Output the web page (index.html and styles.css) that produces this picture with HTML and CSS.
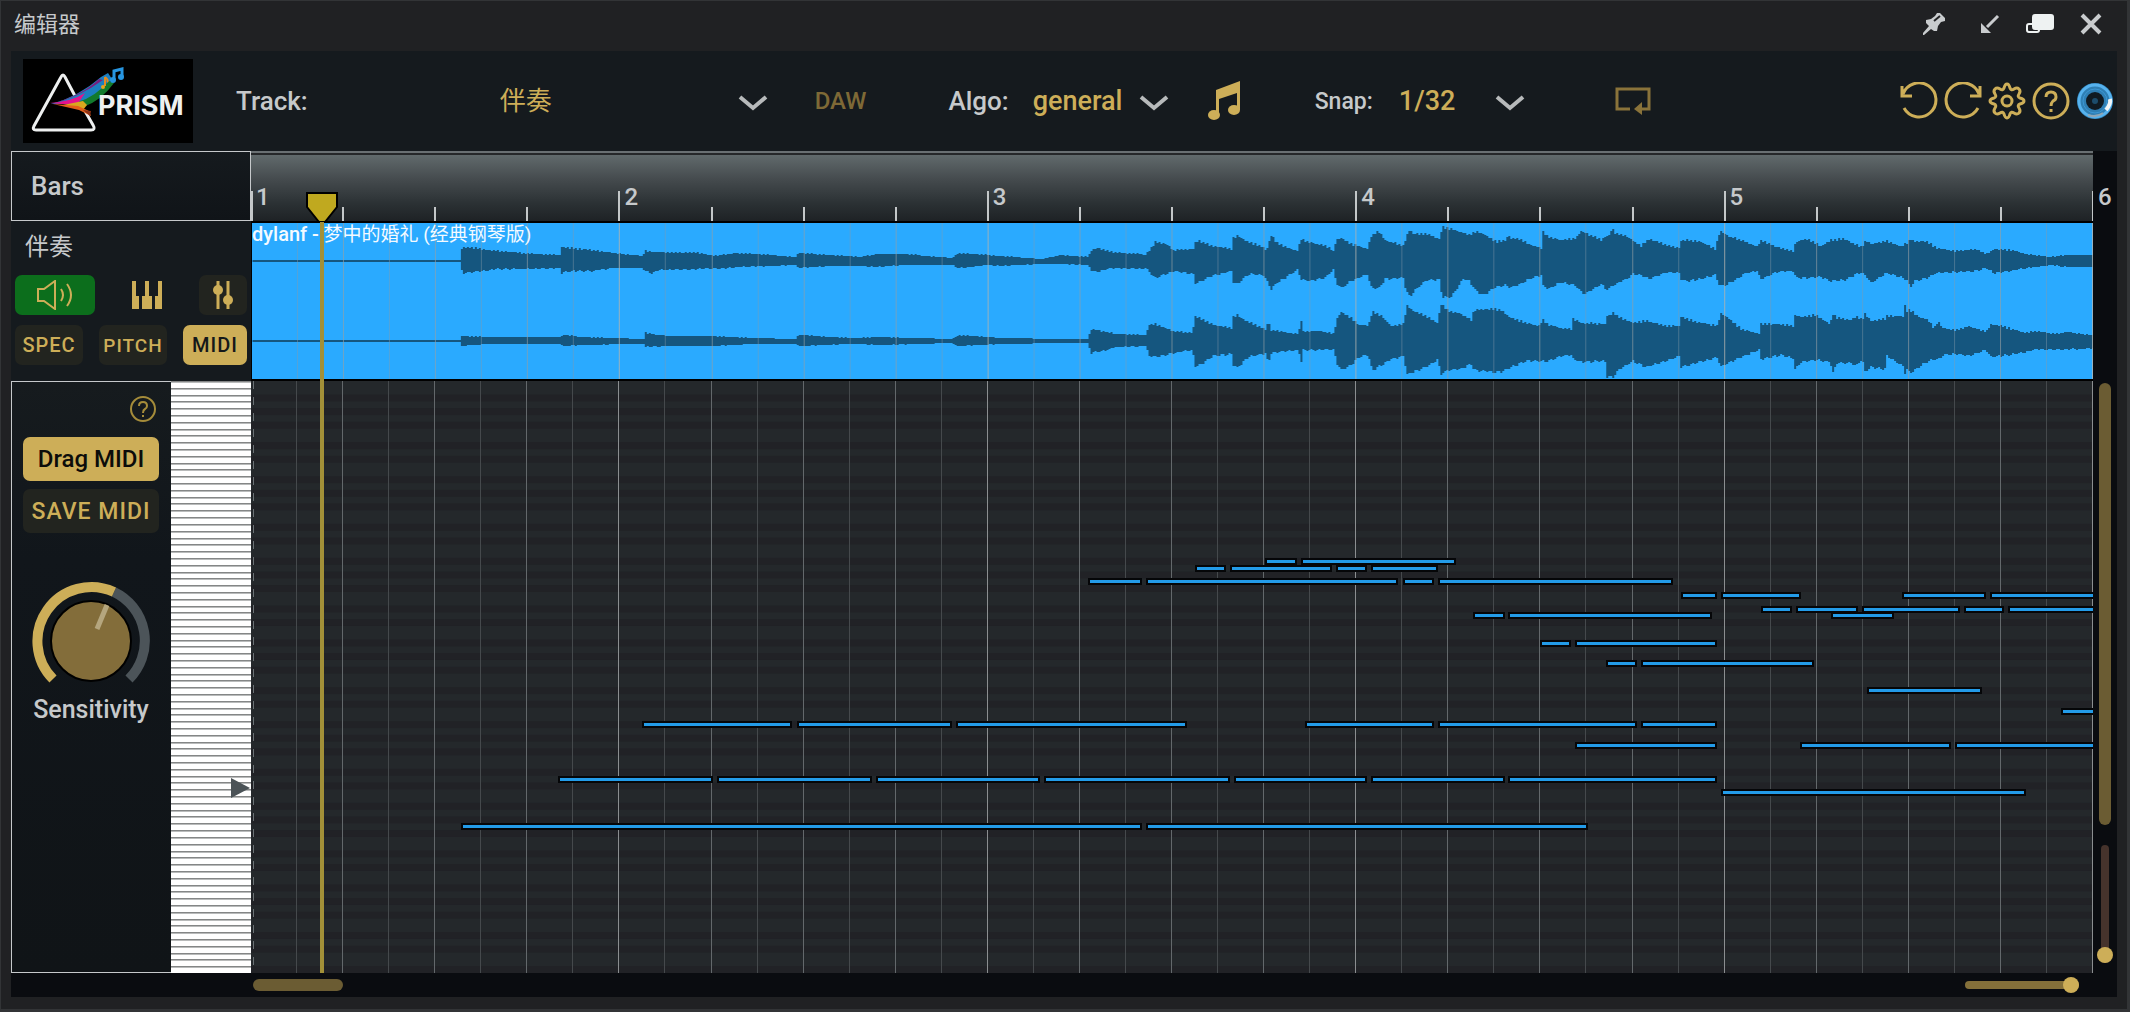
FILE: index.html
```html
<!DOCTYPE html>
<html lang="zh-CN">
<head>
<meta charset="utf-8">
<title>编辑器</title>
<link rel="stylesheet" href="styles.css">
</head>
<body>
<div class="window">
  <header class="titlebar">
    <h1 class="titlebar-name">编辑器</h1>
    <div class="titlebar-actions">
      <button class="icon-button" aria-label="Pin">
        <svg width="24" height="24" viewBox="0 0 24 24"><path d="M15 1h3l5 5v3l-4 1-3 4-1 5h-3L9 17l-7 6H1v-2l6-7-3-3V8l5-1 4-3z" fill="#c9ccce"/><path d="M12 9l6-5M14 12" stroke="#222325" stroke-width="2" fill="none"/></svg>
      </button>
      <button class="icon-button" aria-label="Collapse">
        <svg width="20" height="20" viewBox="0 0 20 20"><path d="M18 2L7 13" stroke="#c9ccce" stroke-width="3"/><path d="M1 9v10h10z" fill="#c9ccce"/></svg>
      </button>
      <button class="icon-button" aria-label="Detach">
        <svg width="30" height="22" viewBox="0 0 30 22"><rect x="2" y="11" width="12" height="8" rx="2" fill="none" stroke="#eef2f2" stroke-width="2"/><rect x="7" y="1" width="22" height="16" rx="3" fill="#eef2f2"/></svg>
      </button>
      <button class="icon-button" aria-label="Close">
        <svg width="22" height="22" viewBox="0 0 22 22"><path d="M2 2l18 18M20 2L2 20" stroke="#c9ccce" stroke-width="4"/></svg>
      </button>
    </div>
  </header>

  <main class="editor">
    <div class="toolbar">
      <svg class="logo" viewBox="0 0 170 84" role="img" aria-label="PRISM">
        <rect width="170" height="84" fill="#000"/>
        <path d="M52 37L42 18Q40 14 38 18L11 67Q9 71 13 71H68Q73 71 70 66L62 52" fill="none" stroke="#eef0f0" stroke-width="3"/>
        <path d="M28 45Q55 38 78 18L85 14 89 20Q72 42 54 45z" fill="#1c7fc0"/>
        <path d="M60 48Q78 42 91 24L86 22Q72 38 55 43z" fill="#127a2c"/>
        <path d="M28 45Q55 39 80 21L76 20Q60 36 28 45z" fill="#7a1f7d"/>
        <path d="M27 44Q50 42 62 34L56 43 50 46z" fill="#e3128c"/>
        <path d="M40 46L60 42 64 46 60 51z" fill="#d9a81e"/>
        <path d="M30 45L55 47 66 52 68 57 56 51z" fill="#e2601a"/>
        <path d="M60 51L68 52 67 57z" fill="#8c3014"/>
        <path d="M82 18v9M82 18q4 3 2 5" stroke="#e58a1f" stroke-width="2" fill="none"/><circle cx="80" cy="28" r="2" fill="#e5a51f"/>
        <path d="M91 20V12l8-2v8" stroke="#2795e0" stroke-width="3" fill="none"/><circle cx="90" cy="21" r="3" fill="#2795e0"/><circle cx="98" cy="18" r="3" fill="#2795e0"/>
        <text x="75" y="56" class="logo-text">PRISM</text>
      </svg>

      <label class="tool-label track-label" for="track">Track:</label>
      <span class="select track-select">
        <select id="track"><option>伴奏</option></select>
        <svg class="chevron" viewBox="0 0 30 16"><path d="M2 2l13 11L28 2" /></svg>
      </span>
      <button class="daw">DAW</button>

      <label class="tool-label algo-label" for="algo">Algo:</label>
      <span class="select algo-select">
        <select id="algo"><option>general</option></select>
        <svg class="chevron" viewBox="0 0 30 16"><path d="M2 2l13 11L28 2" /></svg>
      </span>
      <button class="icon-button notes-button" aria-label="Notes">
        <svg width="34" height="40" viewBox="0 0 34 40"><path d="M9 9L33 0V29h-3V12L12 18V34H9z" fill="#cdae58"/><ellipse cx="7" cy="34" rx="6" ry="5" fill="#cdae58"/><ellipse cx="27" cy="29" rx="6" ry="5" fill="#cdae58"/></svg>
      </button>

      <label class="tool-label snap-label" for="snap">Snap:</label>
      <span class="select snap-select">
        <select id="snap"><option>1/32</option></select>
        <svg class="chevron" viewBox="0 0 30 16"><path d="M2 2l13 11L28 2" /></svg>
      </span>
      <button class="icon-button loop-button" aria-label="Loop">
        <svg width="36" height="30" viewBox="0 0 36 30"><path d="M15 23H2V3h32v20h-7" fill="none" stroke="#8a733a" stroke-width="3"/><path d="M19 23l8-7v13z" fill="#8a733a"/></svg>
      </button>

      <div class="toolbar-actions">
        <button class="icon-button" aria-label="Undo"><svg width="38" height="38" viewBox="0 0 38 38" class="line"><path d="M3 12A17 17 0 1 1 4 26M2 4v10h10"/></svg></button>
        <button class="icon-button" aria-label="Redo"><svg width="38" height="38" viewBox="0 0 38 38" class="line"><path d="M35 12A17 17 0 1 0 34 26M36 4v10H26"/></svg></button>
        <button class="icon-button" aria-label="Settings"><svg width="38" height="38" viewBox="0 0 38 38" class="line gear"><path d="M16 6Q17 2 19 2T22 6Q23 9 26 7 29 5 31 7T31 12Q29 15 32 16 36 17 36 19T32 22Q29 23 31 26 33 29 31 31T26 31Q23 29 22 32 21 36 19 36T16 32Q15 29 12 31 9 33 7 31T7 26Q9 23 6 22 2 21 2 19T6 16Q9 15 7 12 5 9 7 7T12 7Q15 9 16 6z"/><circle cx="19" cy="19" r="5"/></svg></button>
        <button class="icon-button" aria-label="Help"><svg width="38" height="38" viewBox="0 0 38 38" class="line"><circle cx="19" cy="19" r="17"/><path d="M14 15q0-5 5-5t5 5q0 3-3 4-2 2-2 5M19 27v3"/></svg></button>
        <button class="icon-button" aria-label="Account"><svg width="38" height="38" viewBox="0 0 38 38"><circle cx="19" cy="19" r="18" fill="#2f7fb4"/><circle cx="19" cy="19" r="16" fill="none" stroke="#56b2ee" stroke-width="3"/><circle cx="19" cy="19" r="12" fill="none" stroke="#3c97d4" stroke-width="1"/><path d="M34 17Q35 22 30 28" fill="none" stroke="#f2f6f8" stroke-width="4"/><path d="M27 31Q20 36 12 33" fill="none" stroke="#8fa6b5" stroke-width="2"/><circle cx="19" cy="19" r="9" fill="#101a22"/><circle cx="19" cy="19" r="3" fill="#1c4c6c"/></svg></button>
      </div>
    </div>

    <div class="workspace">
      <aside class="sidebar">
        <div class="bars-box">Bars</div>
        <section class="track-panel">
          <h2 class="track-name">伴奏</h2>
          <div class="track-row">
            <button class="chip mute" aria-label="Sound on"><svg width="38" height="30" viewBox="0 0 38 30" class="line thin"><path d="M2 9h6L19 1v28L8 21H2zM25 9q4 6 0 12M31 4q8 11 0 22"/></svg></button>
            <button class="chip piano" aria-label="Piano"><svg width="30" height="28" viewBox="0 0 30 28" fill="#cdae58"><path d="M0 0h4v15h3v13H0zM13 0h4v15h3v13H10V15h3zM26 0h4v28h-7V15h3z"/></svg></button>
            <button class="chip mixer" aria-label="Mixer"><svg width="22" height="28" viewBox="0 0 22 28"><path d="M6 0v28M16 0v28" stroke="#cdae58" stroke-width="3"/><circle cx="6" cy="9" r="5" fill="#cdae58"/><circle cx="16" cy="19" r="5" fill="#cdae58"/></svg></button>
          </div>
          <div class="track-row">
            <button class="chip spec">SPEC</button>
            <button class="chip pitch">PITCH</button>
            <button class="chip midi">MIDI</button>
          </div>
        </section>
        <section class="midi-panel">
          <div class="midi-tools">
            <button class="icon-button midi-help" aria-label="MIDI help"><svg width="28" height="28" viewBox="0 0 28 28"><circle cx="14" cy="14" r="12"/><path d="M10 11q0-4 4-4t4 4q0 2-2 3-2 1-2 4M14 20v2"/></svg></button>
            <button class="wide primary">Drag MIDI</button>
            <button class="wide secondary">SAVE MIDI</button>
            <div class="knob">
              <svg viewBox="0 0 120 120">
                <path d="M98 98A54 54 0 0 0 83 11" stroke="#4c5459" stroke-width="10" fill="none"/>
                <path d="M22 98A54 54 0 0 1 83 11" stroke="#cdae58" stroke-width="10" fill="none"/>
                <circle cx="60" cy="60" r="40" fill="#836d3a" stroke="#000" stroke-width="2"/>
                <path d="M66 48L76 24" stroke="#b5a67e" stroke-width="5"/>
              </svg>
              <input id="sensitivity" type="range" min="0" max="100" value="59">
            </div>
            <label class="knob-label" for="sensitivity">Sensitivity</label>
          </div>
          <div class="keyboard"><span class="key-pointer"></span></div>
        </section>
      </aside>

      <section class="timeline" aria-label="Timeline">
        <div class="ruler">
          <svg id="ticks" class="plot" viewBox="0 0 1842 70" preserveAspectRatio="none"></svg>
          <div class="ruler-numbers"><span>1</span><span>2</span><span>3</span><span>4</span><span>5</span><span class="last">6</span></div>
        </div>
        <div class="clip">
          <svg id="wave" class="plot" viewBox="0 0 1842 156" preserveAspectRatio="none"></svg>
          <p class="clip-name"><b>dylanf -</b> 梦中的婚礼 (经典钢琴版)</p>
        </div>
        <div class="roll"><svg id="roll" class="plot" viewBox="0 0 1842 592" preserveAspectRatio="none"></svg></div>
        <div class="playhead"><svg width="32" height="30" viewBox="0 0 32 30"><path d="M1 1h30v14L19 30h-6L1 15z" fill="#c0a91f" stroke="#000" stroke-width="2"/></svg></div>
      </section>

      <div class="side-strip">
        <div class="scroll-y"></div>
        <input class="zoom-y" type="range" min="0" max="100" value="100" aria-label="Vertical zoom">
      </div>
    </div>

    <footer class="bottom-strip">
      <div class="scroll-x"></div>
      <input class="zoom-x" type="range" min="0" max="100" value="100" aria-label="Horizontal zoom">
    </footer>
  </main>
</div>
<script src="timeline.js"></script>
</body>
</html>
```
FILE: styles.css
```css
* { box-sizing: border-box; }

body {
  margin: 0;
  background: #202123;
  color: #c6c9cb;
  font-family: Roboto, "Noto Sans CJK SC", sans-serif;
  font-size: 26px;
}

h1, h2, p { margin: 0; font-weight: 400; }
svg { display: block; }

button, select {
  font: inherit;
  color: inherit;
  background: none;
  border: 0;
  padding: 0;
}

.window {
  display: flex;
  flex-direction: column;
  min-height: 100vh;
  padding: 0 10px 12px 10px;
  border: 1px solid #323436;
  border-width: 1px 3px 3px 1px;
}

.titlebar {
  display: flex;
  align-items: center;
  justify-content: space-between;
  height: 50px;
  padding: 0 15px 4px 3px;
}

.titlebar-name { padding-top: 2px; font-size: 22px; line-height: 32px; }
.titlebar-actions { display: flex; align-items: center; gap: 25px; }
.titlebar-actions .icon-button:nth-child(2) { margin-left: 9px; }
.icon-button { display: block; }

.editor {
  flex: 1;
  display: flex;
  flex-direction: column;
  background: #151a1e;
}

.toolbar {
  display: flex;
  align-items: center;
  height: 100px;
  padding: 0 3px 0 12px;
}

.logo { width: 170px; height: 84px; }
.logo-text { font: 700 27px Inter, sans-serif; fill: #eef0f0; }

.tool-label { white-space: nowrap; font-size: 26px; font-weight: 500; }
.track-label { margin-left: 43px; }
.algo-label { margin-left: 82px; }
.snap-label { margin-left: 74px; font-size: 23px; }

.select { position: relative; display: block; color: #cdae58; }
.select select { appearance: none; width: 100%; height: 48px; outline: 0; }
.track-select { flex: 0 1 442px; margin-left: 22px; }
.track-select select { text-align-last: center; padding-right: 50px; }
.algo-select { width: 148px; margin-left: 16px; }
.algo-select select, .snap-select select { padding-left: 8px; font-weight: 500; font-size: 27px; }
.snap-select { width: 138px; margin-left: 18px; }

.chevron {
  position: absolute;
  right: 4px;
  top: 18px;
  width: 30px;
  height: 16px;
  fill: none;
  stroke: #b7babb;
  stroke-width: 4;
  pointer-events: none;
}

.daw { margin-left: 43px; font-size: 24px; font-weight: 500; color: #7e6936; }
.notes-button { margin-left: 34px; }
.loop-button { margin-left: 86px; }
.toolbar-actions { display: flex; gap: 6px; margin-left: auto; }

.line { fill: none; stroke: #cdae58; stroke-width: 3; }
.thin { stroke-width: 2; }
.gear { stroke-width: 3; }

.workspace { flex: 1; display: flex; }

.sidebar { flex: none; width: 240px; display: flex; flex-direction: column; }

.bars-box {
  height: 70px;
  padding-left: 19px;
  border: 1px solid #c6c9cb;
  line-height: 68px;
  font-size: 26px;
  font-weight: 500;
  background: linear-gradient(#151a1e, #101418);
}

.track-panel {
  display: flex;
  flex-direction: column;
  gap: 10px;
  height: 160px;
  padding: 8px 4px 0;
}

.track-name { height: 36px; padding-left: 10px; font-size: 24px; line-height: 36px; }
.track-row { display: flex; justify-content: space-between; }

.chip {
  display: flex;
  align-items: center;
  justify-content: center;
  height: 40px;
  border-radius: 7px;
  background: #22241f;
  color: #cdae58;
  font-size: 20px;
  font-weight: 500;
  letter-spacing: 1px;
}

.mute { width: 80px; background: #0c6e1c; }
.piano { width: 78px; background: none; }
.mixer { width: 48px; }
.spec, .pitch { width: 68px; }
.pitch { font-size: 19px; }
.midi { width: 64px; background: #cdae58; color: #15181a; }

.midi-panel { flex: 1; display: flex; }

.midi-tools {
  display: flex;
  flex-direction: column;
  width: 160px;
  padding: 13px 12px 0 11px;
  border: 1px solid #c6c9cb;
  border-right: 0;
  background: linear-gradient(#161b1e, #11161b 30%, #101417);
}

.midi-help { align-self: flex-end; margin-right: 2px; }
.midi-help svg { fill: none; stroke: #a58c3a; stroke-width: 2; }

.wide { height: 44px; border-radius: 7px; font-weight: 500; white-space: nowrap; }
.primary { margin-top: 14px; background: #cdae58; color: #0c0c0a; font-size: 24px; }
.secondary { margin-top: 8px; background: #22241f; color: #cdae58; font-size: 23px; letter-spacing: 1px; }

.knob { position: relative; width: 120px; height: 120px; margin: 48px 0 0 8px; }
.knob input { position: absolute; inset: 0; width: 100%; height: 100%; margin: 0; opacity: 0; }
.knob-label { margin-top: -6px; text-align: center; font-size: 25px; font-weight: 500; line-height: 30px; }

.keyboard {
  position: relative;
  width: 80px;
  background: repeating-linear-gradient(#848686 0, #848686 1px, #b9bbbb 1px, #b9bbbb 2px, #fff 2px, #fff calc(100% / 87));
}

.key-pointer {
  position: absolute;
  right: 1px;
  top: 67%;
  border: 10px solid transparent;
  border-left: 19px solid #4b5357;
  border-right: 0;
}

.timeline { position: relative; flex: 1; display: flex; flex-direction: column; min-width: 0; }
.plot { position: absolute; inset: 0; width: 100%; height: 100%; }

.ruler {
  position: relative;
  height: 70px;
  background: linear-gradient(#6a7073 0, #6a7073 2px, #26282a 2px, #26282a 4px, #616a6c 4px, #454b4e 40%, #2b3134 75%, #1e2225);
}

.ruler-numbers span {
  position: absolute;
  top: 32px;
  padding-left: 5px;
  font-size: 24px;
  font-weight: 500;
  line-height: 28px;
}

.ruler-numbers span:nth-child(2) { left: 20%; }
.ruler-numbers span:nth-child(3) { left: 40%; }
.ruler-numbers span:nth-child(4) { left: 60%; }
.ruler-numbers span:nth-child(5) { left: 80%; }
.ruler-numbers .last { left: 100%; }

.clip {
  position: relative;
  height: 160px;
  border: solid #000;
  border-width: 2px 0 2px 1px;
  background: #2aaaff;
}

.clip-name {
  position: relative;
  color: #f4faff;
  font-size: 19px;
  line-height: 22px;
  white-space: nowrap;
}

.clip-name b { font-weight: 500; font-size: 20px; }

.roll { position: relative; flex: 1; background: #24282b; }

.playhead {
  position: absolute;
  left: 3.8%;
  top: 41px;
  bottom: 0;
  width: 4px;
  margin-left: -1px;
  background: linear-gradient(transparent 24px, #a29038 24px);
}

.playhead svg { margin-left: -14px; }

.side-strip {
  width: 24px;
  display: flex;
  flex-direction: column;
  align-items: center;
  justify-content: space-between;
  padding: 232px 0 10px;
  background: #0a0c10;
}

.scroll-y { flex: 0 1 442px; width: 12px; border-radius: 6px; background: #6b5c33; }

.zoom-y, .zoom-x { appearance: none; margin: 0; background: none; }
.zoom-y { writing-mode: vertical-lr; width: 16px; height: 118px; }
.zoom-x { width: 114px; height: 16px; }

.zoom-y::-webkit-slider-runnable-track { width: 8px; border-radius: 4px; background: #46332c; }
.zoom-x::-webkit-slider-runnable-track { height: 8px; border-radius: 4px; background: #84703a; }

.zoom-y::-webkit-slider-thumb, .zoom-x::-webkit-slider-thumb {
  appearance: none;
  width: 16px;
  height: 16px;
  border-radius: 50%;
  background: #cdae58;
}

.zoom-y::-webkit-slider-thumb { margin-left: -4px; }
.zoom-x::-webkit-slider-thumb { margin-top: -4px; }

.bottom-strip {
  display: flex;
  align-items: center;
  justify-content: space-between;
  height: 24px;
  padding: 0 38px 0 242px;
  background: #0a0c10;
}

.scroll-x { width: 90px; height: 12px; border-radius: 6px; background: #6b5c33; }
```
FILE: timeline.js
```js
const WIDTH = 1842;
const ORIGIN = 251;
const BARS = 5;
const HALF_BEAT = WIDTH / (BARS * 8);
const ROWS = 87;
const ROW = 592 / ROWS;
const BLACK_KEYS = [2, 4, 6, 9, 11];

// [row, start, end, start, end, ...]
const NOTES = [
  [26, 1267, 1295, 1303, 1454],
  [27, 1197, 1224, 1232, 1330, 1338, 1365, 1373, 1436],
  [29, 1090, 1140, 1148, 1396, 1405, 1432, 1440, 1671],
  [31, 1683, 1715, 1723, 1799, 1904, 1984, 1992, 2095],
  [33, 1763, 1790, 1798, 1856, 1864, 1958, 1966, 2002, 2010, 2095],
  [34, 1475, 1503, 1510, 1710, 1833, 1892],
  [38, 1542, 1569, 1577, 1715],
  [41, 1608, 1635, 1643, 1812],
  [45, 1869, 1980],
  [48, 2063, 2095],
  [50, 644, 790, 799, 950, 958, 1185, 1307, 1432, 1440, 1635, 1643, 1715],
  [53, 1577, 1715, 1802, 1949, 1957, 2095],
  [58, 560, 711, 719, 870, 878, 1038, 1046, 1228, 1236, 1365, 1373, 1503, 1510, 1715],
  [60, 1723, 2024],
  [65, 463, 1140, 1148, 1586]
];

// Envelopes as triples: position, height above the centre, height below it
const LEFT = [252,1,1, 458,1,1, 459,9,7, 461,14,12, 480,12,10, 495,10,8, 520,8,8, 558,6,7, 560,14,12, 567,13,10, 590,11,10, 612,8,7, 641,5,7, 643,10,10, 650,9,12, 657,9,9, 697,8,8, 712,5,7, 718,6,8, 735,8,6, 770,6,5, 794,4,4, 797,8,7, 830,6,5, 860,4,5, 874,7,6, 905,7,4, 925,5,4, 951,3,4, 957,8,7, 985,6,4, 1000,5,5, 1040,2,3, 1060,6,3, 1087,4,4, 1089,10,9, 1095,13,11, 1110,9,7, 1140,7,8, 1144,6,7, 1149,12,12, 1154,19,17, 1165,17,13, 1172,11,10, 1192,12,13, 1194,19,22, 1198,20,21, 1210,15,15, 1230,12,10, 1231,23,20, 1236,25,23, 1247,19,13, 1262,14,14, 1265,10,19, 1270,26,28, 1275,18,22, 1282,15,18, 1297,10,8, 1299,22,18, 1308,19,20, 1325,15,16, 1332,10,8, 1335,21,22, 1340,23,27, 1350,17,20, 1367,12,13, 1369,24,26, 1377,30,28, 1384,21,18, 1402,15,17, 1405,24,30, 1409,32,36, 1412,27,31, 1425,27,19, 1438,22,19, 1441,34,36, 1450,32,36, 1462,28,18, 1468,26,20, 1475,29,30, 1482,27,34, 1495,19,26, 1505,21,24, 1507,27,26, 1509,22,26, 1515,23,25, 1530,16,17, 1540,13,14, 1541,30,24, 1547,24,28, 1560,21,21, 1575,23,25, 1580,30,31, 1584,28,33, 1600,21,23, 1605,25,28, 1609,26,27, 1611,35,24, 1613,28,24, 1625,25,18, 1632,20,13, 1640,15,14, 1648,22,18, 1665,16,11, 1678,13,12, 1679,20,18, 1686,21,20, 1700,19,18, 1714,12,14, 1719,30,25, 1727,25,23, 1745,19,12, 1757,14,10, 1759,21,19, 1775,14,11, 1792,10,10, 1795,19,17, 1805,22,17, 1820,15,16, 1830,21,20, 1843,22,19, 1860,14,11, 1865,20,15, 1870,17,22, 1885,20,12, 1900,15,16, 1907,19,20, 1909,22,27, 1913,20,20, 1927,19,17, 1935,13,12, 1955,10,11, 1975,12,10, 1985,7,7, 1993,12,12, 2010,11,10, 2025,7,7, 2050,4,4, 2066,6,6, 2094,6,6];
const RIGHT = [252,1,1, 458,1,1, 460,5,5, 485,4,3, 558,4,3, 563,6,5, 580,4,4, 642,2,3, 644,8,6, 665,5,5, 712,5,5, 750,3,3, 794,2,3, 797,6,5, 850,3,3, 880,4,4, 950,2,2, 958,6,5, 1000,3,3, 1060,2,2, 1087,2,2, 1089,12,12, 1105,9,9, 1115,7,6, 1145,6,5, 1147,16,15, 1154,17,16, 1172,10,12, 1191,8,9, 1194,25,25, 1200,22,23, 1212,16,15, 1230,13,13, 1232,24,24, 1236,26,27, 1247,19,16, 1265,11,12, 1267,23,25, 1269,11,12, 1297,7,9, 1300,21,20, 1302,9,9, 1318,10,9, 1333,7,8, 1335,21,22, 1340,29,29, 1350,23,24, 1358,16,16, 1367,15,14, 1371,30,30, 1380,25,24, 1390,15,18, 1403,17,15, 1405,36,34, 1412,30,31, 1425,25,26, 1436,18,19, 1440,37,33, 1447,30,29, 1460,27,28, 1470,21,23, 1473,31,29, 1490,32,31, 1500,31,31, 1508,24,27, 1525,18,20, 1539,15,20, 1541,23,20, 1545,17,21, 1560,13,15, 1570,12,14, 1572,22,18, 1580,18,21, 1604,17,20, 1606,25,36, 1612,28,36, 1618,24,28, 1632,18,20, 1645,20,26, 1665,15,20, 1678,15,15, 1680,24,26, 1695,19,22, 1717,15,16, 1719,28,26, 1727,23,22, 1740,12,16, 1758,7,9, 1760,17,18, 1780,17,14, 1792,15,17, 1793,26,29, 1800,24,21, 1815,26,19, 1829,17,21, 1832,27,32, 1836,23,22, 1850,21,22, 1855,25,25, 1861,21,18, 1864,27,30, 1870,20,26, 1884,22,28, 1886,25,15, 1902,25,25, 1904,35,32, 1906,30,28, 1909,31,32, 1918,24,26, 1927,21,20, 1933,13,18, 1937,19,19, 1942,13,14, 1955,11,13, 1968,15,15, 1985,9,9, 1990,17,16, 2000,15,15, 2025,8,11, 2035,10,8, 2055,7,9, 2068,9,8, 2080,7,8, 2094,6,7];

function rect(x, y, w, h, fill) {
  return `<rect x="${x}" y="${y}" width="${w}" height="${h}" fill="${fill}"/>`;
}

function gridLines(height, bar, beat, half) {
  let out = "";
  for (let i = 1; i <= BARS * 8; i++) {
    const colour = i % 8 === 0 ? bar : i % 2 === 0 ? beat : half;
    out += rect(Math.round(i * HALF_BEAT) - 1, 0, 1, height, colour);
  }
  return out;
}

function envelope(points, centre) {
  let top = "";
  let bottom = "";
  let p = 0;
  for (let x = 252; x < 2093; x += 2) {
    while (points[p + 3] <= x) p += 3;
    const t = (x - points[p]) / (points[p + 3] - points[p]);
    const up = points[p + 1] + t * (points[p + 4] - points[p + 1]);
    const down = points[p + 2] + t * (points[p + 5] - points[p + 2]);
    // small ripple so the edges look like sampled audio
    const ripple = up > 3 ? Math.sin(x * 1.7) * Math.min(up / 14, 1) : 0;
    const u = centre - Math.round(up + ripple);
    const d = centre + Math.round(down + (up > 3 ? Math.cos(x * 2.3) * Math.min(down / 14, 1) : 0));
    const left = x - ORIGIN;
    top += `L${left} ${u}H${left + 2}`;
    bottom = `L${left + 2} ${d}H${left}` + bottom;
  }
  return `<path d="M0 ${centre}${top}${bottom}Z" fill="#15567f"/>`;
}

let ticks = "";
for (let i = 0; i <= BARS * 4; i++) {
  const major = i % 4 === 0;
  const x = Math.max(Math.round(i * HALF_BEAT * 2) - 1, 0);
  ticks += rect(x, major ? 40 : 56, 2, 30, "#c3c7c8");
}
document.getElementById("ticks").innerHTML = ticks;

document.getElementById("wave").innerHTML =
  envelope(LEFT, 38) + envelope(RIGHT, 118) +
  gridLines(156, "rgba(180,180,175,.8)", "rgba(150,160,165,.65)", "rgba(135,155,170,.45)");

let roll = "";
for (let r = 0; r < ROWS; r++) {
  if (BLACK_KEYS.includes(r % 12)) roll += rect(0, r * ROW, WIDTH, ROW, "#212226");
}
roll += gridLines(592, "#8b8e90", "#63686b", "#45494c");
for (let y = 0; y < 592; y += 16) roll += rect(2, y, 1, 8, "#6b7275");
for (const [row, ...spans] of NOTES) {
  const y = Math.round(row * ROW);
  for (let i = 0; i < spans.length; i += 2) {
    const x = spans[i] - ORIGIN;
    const w = spans[i + 1] - spans[i];
    roll += rect(x - 2, y, w + 4, 7, "#050608") + rect(x, y + 2, w, 3, "#239be8");
  }
}
document.getElementById("roll").innerHTML = roll;
```
